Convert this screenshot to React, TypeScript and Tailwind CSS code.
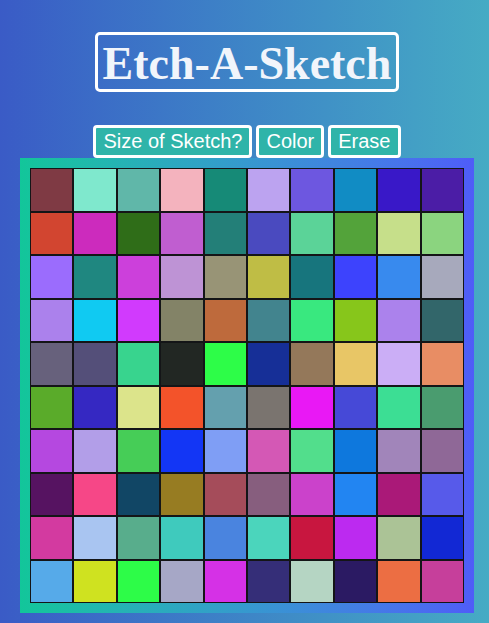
const COLORS = [
  "#7f3a44", "#7fe8cd", "#60b7a9", "#f4b3be", "#168a77", "#bca3f0", "#6d57e0", "#118cc4", "#3918c8", "#4b1da6",
  "#d24530", "#cc2bbd", "#2f6d18", "#c05ed0", "#237f78", "#4a4abf", "#5bd398", "#53a33a", "#c6df8a", "#8bd47f",
  "#9b6cfd", "#1f8780", "#cc40db", "#be93d5", "#989476", "#bfbd45", "#17757d", "#3d43fd", "#388aee", "#a7a9bc",
  "#ab81ec", "#10caf2", "#d13afd", "#838367", "#be6a3c", "#42848e", "#39e87f", "#87c61b", "#ab82ec", "#32666a",
  "#67617c", "#544f79", "#38d48e", "#222723", "#2dfd48", "#162f97", "#94785a", "#e8c666", "#cbaef6", "#e88d64",
  "#5aab2a", "#3528c2", "#dce48b", "#f3532a", "#64a0ae", "#7a746f", "#e918f5", "#4649d7", "#3cde94", "#4a9c6f",
  "#b548e0", "#b29ee8", "#46cd57", "#1336f5", "#7f9ef5", "#d458b5", "#52de8c", "#0e78dd", "#a185ba", "#8f6897",
  "#561361", "#f64787", "#114665", "#977c22", "#a54c5a", "#875e7e", "#cb42cb", "#2285f2", "#aa1978", "#575aea",
  "#d33aa0", "#a9c5f1", "#58ad8c", "#3fcabd", "#4a84df", "#4bd5bc", "#c8163f", "#bc2af0", "#abc396", "#1228d4",
  "#56aae9", "#cfe220", "#2dfc48", "#a6a7c6", "#d531e6", "#352e78", "#b5d5c3", "#2b1a63", "#ec6e43", "#c63f9b",
];

const Button = ({ label }: { label: string }) => (
  <button className="border-[3px] border-white rounded-[4px] bg-[#2fb4a9] px-[7px] py-[2px] text-[20px] leading-[23px] text-white font-['Liberation_Sans',Arial,sans-serif]">
    {label}
  </button>
);

export default function App() {
  return (
    <div className="min-h-[623px] w-full bg-gradient-to-r from-[#3a5bc6] to-[#46abc4] flex flex-col items-center pl-[5px] pt-[32px]">
      <h1 className="border-[3px] border-white rounded-[5px] px-[5px] pt-[3px] text-[46px] leading-[51px] font-bold text-[#f1f5fb] font-['Liberation_Serif','Times_New_Roman',serif]">
        Etch-A-Sketch
      </h1>

      <div className="flex gap-[4px] mt-[33px]">
        <Button label="Size of Sketch?" />
        <Button label="Color" />
        <Button label="Erase" />
      </div>

      <div className="p-[10px] bg-gradient-to-r from-[#12c69a] to-[#4f5cf8]">
        <div className="grid grid-cols-10 grid-rows-10 w-[434px] h-[435px]">
          {COLORS.map((c, i) => (
            <div key={i} className="border border-[#141517]" style={{ backgroundColor: c }} />
          ))}
        </div>
      </div>
    </div>
  );
}
